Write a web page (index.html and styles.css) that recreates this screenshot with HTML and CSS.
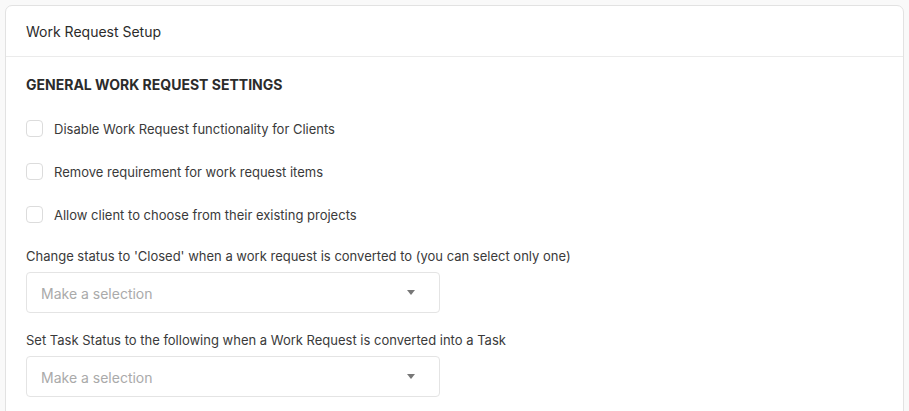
FILE: index.html
```html
<!DOCTYPE html>
<html>
<head>
<meta charset="utf-8">
<link rel="stylesheet" href="styles.css">
</head>
<body>
<div class="card">
  <div class="card-header">Work Request Setup</div>
  <div class="card-body">
    <h3 class="section-title">GENERAL WORK REQUEST SETTINGS</h3>
    <label class="check-row"><span class="box"></span><span>Disable Work Request functionality for Clients</span></label>
    <label class="check-row"><span class="box"></span><span>Remove requirement for work request items</span></label>
    <label class="check-row"><span class="box"></span><span>Allow client to choose from their existing projects</span></label>
    <div class="field">
      <div class="field-label">Change status to 'Closed' when a work request is converted to (you can select only one)</div>
      <div class="select"><span class="placeholder">Make a selection</span><span class="caret"></span></div>
    </div>
    <div class="field">
      <div class="field-label">Set Task Status to the following when a Work Request is converted into a Task</div>
      <div class="select"><span class="placeholder">Make a selection</span><span class="caret"></span></div>
    </div>
  </div>
</div>
</body>
</html>
```
FILE: styles.css
```css
html, body {
  margin: 0;
  padding: 0;
  background: #f9f9f9;
  font-family: Inter, "Noto Sans", sans-serif;
  font-size: 13px;
  color: #333;
}
body {
  padding: 5px 5px 0 5px;
  height: 411px;
  box-sizing: border-box;
  overflow: hidden;
}
.card {
  background: #fff;
  border: 1px solid #e2e2e2;
  border-radius: 7px;
  height: 440px;
}
.card-header {
  height: 50px;
  border-bottom: 1px solid #ebebeb;
  display: flex;
  align-items: center;
  padding: 0 20px;
  font-size: 14px;
  color: #2b2b2b;
}
.card-body {
  padding: 19px 20px 0 20px;
}
.section-title {
  margin: 0 0 26px 0;
  font-size: 14px;
  font-weight: 700;
  color: #2b2b2b;
  line-height: 18px;
}
.check-row {
  display: flex;
  align-items: center;
  gap: 11px;
  height: 17px;
  margin-bottom: 26px;
  color: #3a3a3a;
}
.box {
  width: 17px;
  height: 17px;
  box-sizing: border-box;
  border: 1px solid #dcdcdc;
  border-radius: 4px;
  flex: none;
  background: #fff;
}
.field {
  margin-top: -2px;
  margin-bottom: 20px;
}
.field-label {
  line-height: 18px;
  margin-bottom: 7px;
  color: #3a3a3a;
}
.select {
  box-sizing: border-box;
  width: 414px;
  height: 41px;
  border: 1px solid #e4e4e4;
  border-radius: 4px;
  display: flex;
  align-items: center;
  justify-content: space-between;
  padding: 0 24px 0 14px;
}
.placeholder {
  color: #aaa;
  font-size: 14px;
  padding-top: 2px;
}
.caret {
  width: 0;
  height: 0;
  border-left: 4px solid transparent;
  border-right: 4px solid transparent;
  border-top: 5px solid #777;
}
```
